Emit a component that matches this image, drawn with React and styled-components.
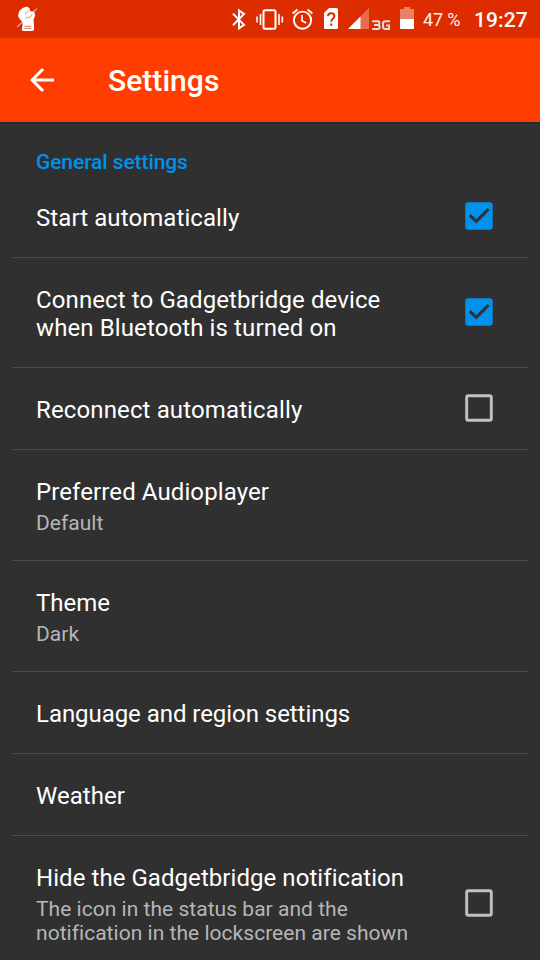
import React from "react";
import styled, { createGlobalStyle } from "styled-components";

const GlobalStyle = createGlobalStyle`
  * { box-sizing: border-box; }
  body { margin: 0; background: #303030; font-family: Roboto, sans-serif; overflow: hidden; }
`;

const Screen = styled.div`
  width: 540px;
  height: 960px;
  overflow: hidden;
  display: flex;
  flex-direction: column;
  background: #303030;
  color: #fff;
`;

const StatusBar = styled.header`
  flex: none;
  height: 38px;
  display: flex;
  align-items: flex-start;
  background: #dd2c00;
`;

const StatusIcon = styled.svg`
  flex: none;
  display: block;
  width: ${(p) => p.$w}px;
  height: 38px;
  margin-left: ${(p) => p.$gap}px;
`;

const BatteryLevel = styled.span`
  width: 40px;
  margin-left: 9px;
  font-size: 18px;
  line-height: 39px;
  letter-spacing: -0.15px;
  white-space: nowrap;
  color: #fff0ec;
`;

const Clock = styled.time`
  margin-left: 11px;
  font-size: 21px;
  font-weight: 500;
  line-height: 41px;
  letter-spacing: 0.1px;
  white-space: nowrap;
`;

const Toolbar = styled.div`
  flex: none;
  height: 84px;
  display: flex;
  align-items: center;
  padding-left: 24px;
  background: #ff3d00;
  box-shadow: 0 1px 2px rgba(0, 0, 0, 0.3);
`;

const BackButton = styled.button`
  width: 36px;
  height: 36px;
  padding: 0;
  border: 0;
  background: none;
  color: #fff;
`;

const ToolbarTitle = styled.h1`
  margin: 1px 0 0 48px;
  font-size: 30px;
  font-weight: 500;
  line-height: 36px;
  letter-spacing: 0.05px;
`;

const Category = styled.h2`
  flex: none;
  height: 54px;
  margin: 0;
  padding: 28px 36px 0;
  font-size: 21px;
  font-weight: 500;
  line-height: 25px;
  letter-spacing: -0.09px;
  color: #0091ea;
`;

const List = styled.ul`
  margin: 0;
  padding: 0 12px;
  list-style: none;
`;

const Row = styled.li`
  height: ${(p) => p.$h}px;
  display: flex;
  align-items: center;
  padding: 0 24px;
  border-bottom: 1px solid #4d4d4d;
`;

const Labels = styled.div`
  flex: 1;
  padding-top: 2px;
  white-space: pre-line;
`;

const Title = styled.div`
  font-size: 24px;
  line-height: 28px;
  letter-spacing: ${(p) => p.$tracking}px;
`;

const Summary = styled.div`
  margin: 5px 0 -1px;
  font-size: 21px;
  line-height: 24px;
  letter-spacing: 0.03px;
  color: #b6b6b6;
`;

const CheckIcon = styled.svg`
  flex: none;
  width: 36px;
  height: 36px;
  margin: 0 7px 1px 0;
`;

function Checkbox({ checked }) {
  return (
    <CheckIcon viewBox="0 0 36 36" role="checkbox" aria-checked={checked}>
      {checked ? (
        <>
          <rect x="4.3" y="4.3" width="27.4" height="27.4" rx="3" fill="#0091ea" />
          <path d="M8.7 17.2 L15.2 23.4 L27.5 11.1" fill="none" stroke="#303030" strokeWidth="3" />
        </>
      ) : (
        <rect x="5.7" y="5.7" width="24.6" height="24.6" rx="1.6" fill="none" stroke="#c1c1c1" strokeWidth="2.9" />
      )}
    </CheckIcon>
  );
}

const rows = [
  { title: "Start automatically", h: 82, checked: true, tracking: 0.09 },
  { title: "Connect to Gadgetbridge device\nwhen Bluetooth is turned on", h: 110, checked: true, tracking: 0.11 },
  { title: "Reconnect automatically", h: 82, checked: false, tracking: 0.13 },
  { title: "Preferred Audioplayer", summary: "Default", h: 111, tracking: 0.1 },
  { title: "Theme", summary: "Dark", h: 111, tracking: 0 },
  { title: "Language and region settings", h: 82, tracking: -0.05 },
  { title: "Weather", h: 82, tracking: 0.05 },
  {
    title: "Hide the Gadgetbridge notification",
    summary: "The icon in the status bar and the\nnotification in the lockscreen are shown",
    h: 135,
    checked: false,
    tracking: 0.06,
  },
];

export default function App() {
  return (
    <Screen>
      <GlobalStyle />
      <StatusBar>
        <StatusIcon $w={22} $gap={16} viewBox="16 0 22 38">
          <path d="M36.8 8.6 L17.2 26.8" stroke="#fff" strokeOpacity=".65" strokeWidth="1.1" />
          <path d="M18 15.5 L19.3 11 L22.5 8 L27 6.6 L29.8 8.6 L30 11 L34.3 12 L35.2 15.5 L33.6 19.5 L34 25 V30 L32.6 31 H22.8 L21.8 30 L22.6 24.6 L22.2 21.5 L19.3 18.7 Z" fill="#fff" />
          <path d="M25 14 L28.8 11 M25.6 18.6 L28 16.8 L29.6 17.8 L32 14.4" fill="none" stroke="#dd2c00" strokeWidth=".9" opacity=".65" />
          <path d="M24.4 26.3 H31 M24.4 28.4 H31" stroke="#dd2c00" strokeWidth="1" opacity=".65" />
        </StatusIcon>
        <StatusIcon $w={14} $gap={194} viewBox="232 0 14 38" fill="none" stroke="#fff" strokeWidth="2">
          <path d="M233 13.6 L244 24.8 L239 28.4 V10.4 L244 14 L233 25.2" />
        </StatusIcon>
        <StatusIcon $w={28} $gap={10} viewBox="256 0 28 38" fill="none" stroke="#fff" strokeWidth="2">
          <rect x="263.5" y="10.3" width="12" height="18.5" rx="1.5" />
          <path d="M260.5 14 V25 M257 16.5 V22.5 M279 14 V25 M282.3 16.5 V22.5" strokeWidth="1.6" />
        </StatusIcon>
        <StatusIcon $w={22} $gap={8} viewBox="292 0 22 38" fill="none" stroke="#fff" strokeWidth="1.9">
          <circle cx="302.5" cy="20.2" r="8.6" />
          <path d="M302 15 V20.7 L306.2 23" strokeWidth="1.6" />
          <path d="M292.6 13.4 L297.5 9.4 M307.5 9.4 L312.4 13.4" />
        </StatusIcon>
        <StatusIcon $w={15} $gap={10} viewBox="324 0 15 38">
          <path d="M329 8 H336.5 Q338 8 338 9.5 V27.5 Q338 29 336.5 29 H325.5 Q324 29 324 27.5 V13 Z" fill="#fff" />
          <path d="M328 16.2 C328 12.3 334.4 12.3 334.4 16.2 C334.4 18.6 331.2 18.7 331.2 21.8 M331.2 23.6 V25.7" fill="none" stroke="#dd2c00" strokeWidth="2" />
        </StatusIcon>
        <StatusIcon $w={21} $gap={9} viewBox="348 0 21 38">
          <path d="M348 29 L369 8 V29 Z" fill="#fff" opacity=".3" />
          <path d="M348 29 L360.5 16.5 V29 Z" fill="#fff" />
        </StatusIcon>
        <StatusIcon $w={19} $gap={3} viewBox="372 0 19 38" fill="none" stroke="#dedede" strokeWidth="2">
          <path d="M372.2 21.3 H378 Q379.4 21.3 379.4 23 Q379.4 25 377.8 25 H374 M377.8 25 Q379.6 25 379.6 27 Q379.6 29 378 29 H372.2" />
          <path d="M390 21.3 H385.4 Q383 21.3 383 23.7 V26.6 Q383 29 385.4 29 H389.1 V25.4 H386" />
        </StatusIcon>
        <StatusIcon $w={14} $gap={9} viewBox="400 0 14 38" fill="#fff">
          <path d="M404 7 H410 V9 H413 Q414 9 414 10 V19 H400 V10 Q400 9 401 9 H404 Z" opacity=".4" />
          <path d="M400 19 H414 V28 Q414 29 413 29 H401 Q400 29 400 28 Z" />
        </StatusIcon>
        <BatteryLevel>47 %</BatteryLevel>
        <Clock>19:27</Clock>
      </StatusBar>
      <Toolbar>
        <BackButton aria-label="Back">
          <svg width="36" height="36" viewBox="0 0 24 24" fill="currentColor">
            <path d="M20 11H7.83l5.59-5.59L12 4l-8 8 8 8 1.41-1.41L7.83 13H20v-2z" />
          </svg>
        </BackButton>
        <ToolbarTitle>Settings</ToolbarTitle>
      </Toolbar>
      <Category>General settings</Category>
      <List>
        {rows.map((row) => (
          <Row key={row.title} $h={row.h}>
            <Labels>
              <Title $tracking={row.tracking}>{row.title}</Title>
              {row.summary && <Summary>{row.summary}</Summary>}
            </Labels>
            {row.checked !== undefined && <Checkbox checked={row.checked} />}
          </Row>
        ))}
      </List>
    </Screen>
  );
}
